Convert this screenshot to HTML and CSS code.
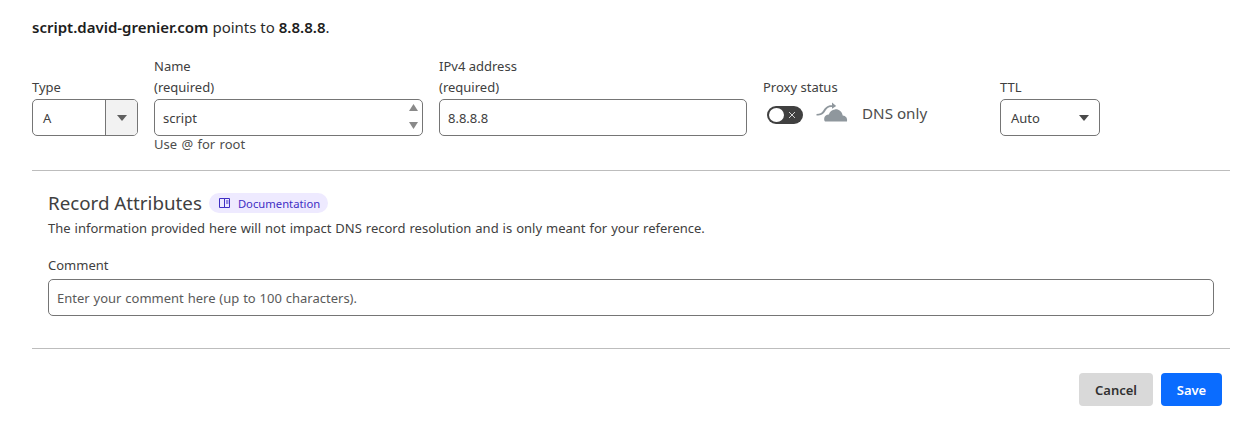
FILE: index.html
```html
<!DOCTYPE html>
<html lang="en">
<head>
<meta charset="utf-8">
<title>DNS record</title>
<link rel="stylesheet" href="styles.css">
</head>
<body>
<main class="form">
  <p class="summary"><strong>script.david-grenier.com</strong> points to <strong>8.8.8.8</strong>.</p>
  <div class="fields">
    <div class="field field-type">
      <label class="label">Type</label>
      <div class="box select-type">
        <span class="value">A</span>
        <span class="select-arrow"><svg width="10" height="6" viewBox="0 0 10 6"><path d="M0 0h10L5 6z" fill="#5f5f5f"/></svg></span>
      </div>
    </div>
    <div class="field field-name">
      <label class="label">Name<br>(required)</label>
      <div class="box input-name">
        <span class="value value-name">script</span>
        <span class="spinner">
          <svg width="9" height="7" viewBox="0 0 9 7"><path d="M4.500 0L9 7H0z" fill="#8a8a8a"/></svg>
          <svg width="9" height="7" viewBox="0 0 9 7"><path d="M0 0h9L4.500 7z" fill="#8a8a8a"/></svg>
        </span>
      </div>
      <div class="hint">Use @ for root</div>
    </div>
    <div class="field field-ip">
      <label class="label">IPv4 address<br>(required)</label>
      <div class="box input-ip"><span class="value value-name">8.8.8.8</span></div>
    </div>
    <div class="field field-proxy">
      <label class="label">Proxy status</label>
      <div class="proxy">
        <span class="toggle">
          <span class="knob"></span>
          <svg class="toggle-x" width="8" height="8" viewBox="0 0 8 8" fill="none" stroke="#e4e4e4" stroke-width=".900"><path d="M1 1l6 6M7 1L1 7"/></svg>
        </span>
        <svg class="cloud" width="32" height="21" viewBox="0 0 32 21">
          <path d="M9 20.500h22c.8-3.200-1.200-5.800-4.300-6C25.800 10.500 22.800 8 19 8.400c-3 .3-5.200 2.300-6.200 5-2.300.1-4 1.300-4.500 3.300-.3 1.600-.1 3 .7 3.800z" fill="#8f979d"/>
          <path d="M0.500 13c3.500 0 5-.9 6.800-3.500C9 6.800 11 4.200 15.500 4.200h.5V1.500l4.200 3.400L16 7.800V6h-.7c-3.200 0-4.800 2.100-6.300 4.500-1.800 2.700-3.600 4-8.500 4z" fill="#8f979d"/>
        </svg>
        <span class="proxy-text">DNS only</span>
      </div>
    </div>
    <div class="field field-ttl">
      <label class="label">TTL</label>
      <div class="box select-ttl">
        <span>Auto</span>
        <svg width="10" height="6" viewBox="0 0 10 6"><path d="M0 0h10L5 6z" fill="#4a4a4a"/></svg>
      </div>
    </div>
  </div>
  <hr class="rule rule-top">
  <section class="attributes">
    <div class="attr-head">
      <h2>Record Attributes</h2>
      <a class="doc-pill">
        <svg width="11" height="10" viewBox="0 0 11 10" fill="none" stroke="#3f2fc4" stroke-width="1"><path d="M.500.500h5v9h-5zM5.500.500h5v9h-5z"/><path d="M7 3h2.500M7 5h2.500"/></svg>
        <span>Documentation</span>
      </a>
    </div>
    <p class="attr-desc">The information provided here will not impact DNS record resolution and is only meant for your reference.</p>
    <label class="label comment-label">Comment</label>
    <div class="box input-comment">Enter your comment here (up to 100 characters).</div>
  </section>
  <hr class="rule rule-bottom">
  <div class="actions">
    <button class="btn btn-cancel">Cancel</button>
    <button class="btn btn-save">Save</button>
  </div>
</main>
</body>
</html>
```
FILE: styles.css
```css
* { box-sizing: border-box; }
html, body { margin: 0; padding: 0; background: #fff; }
body {
  font-family: "Noto Sans", "Open Sans", sans-serif;
  font-size: 13px;
  color: #404040;
  width: 1253px;
  height: 421px;
  overflow: hidden;
}
.form { padding: 17px 23px 0 32px; }
.summary { margin: 0; font-size: 15px; line-height: 20px; color: #2b2b2b; }
.summary strong { font-weight: 600; color: #1d1d1d; }
.fields { display: flex; margin-top: 19px; height: 98px; align-items: flex-start; }
.field { display: flex; flex-direction: column; }
.field-type { width: 106px; margin-right: 16px; padding-top: 21px; }
.field-name { width: 269px; margin-right: 16px; }
.field-ip { width: 308px; margin-right: 16px; }
.field-proxy { width: 237px; padding-top: 21px; }
.field-ttl { width: 100px; padding-top: 21px; }
.label { display: block; line-height: 21px; font-size: 13px; color: #404040; }
.box {
  border: 1px solid #757575;
  border-radius: 5px;
  background: #fff;
  height: 37px;
  display: flex;
  align-items: center;
  margin-top: 1px;
}
.select-type { overflow: hidden; }
.select-type .value { flex: 1; padding-left: 10px; }
.select-arrow {
  width: 32px;
  height: 100%;
  background: #f2f2f2;
  border-left: 1px solid #757575;
  display: flex;
  align-items: center;
  justify-content: center;
}
.value-name { flex: 1; padding-left: 8px; }
.spinner {
  display: flex;
  flex-direction: column;
  justify-content: space-between;
  height: 25px;
  margin: -3px 4px 0 0;
}
.hint { font-size: 13px; line-height: 17px; word-spacing: 1px; color: #4d4d4d; }
.proxy { display: flex; align-items: center; height: 32px; padding-left: 4px; }
.toggle {
  width: 36px;
  height: 18px;
  margin-top: 2px;
  border-radius: 9px;
  background: #404040;
  display: flex;
  align-items: center;
  padding: 0 2px;
}
.knob { width: 15px; height: 14px; border-radius: 50%; background: #fff; }
.toggle-x { margin-left: 4px; }
.cloud { margin-left: 13px; margin-top: -6px; }
.proxy-text { margin: -2px 0 0 14px; font-size: 15.200px; color: #4d4d4d; }
.select-ttl { justify-content: space-between; padding: 0 10px; }
.rule { border: 0; border-top: 1px solid #bdbdbd; margin: 0; }
.rule-top { margin-top: 16px; width: 1198px; }
.attributes { padding: 21px 16px 0; }
.attr-head { display: flex; align-items: center; height: 22px; }
.attr-head h2 { margin: 0; font-size: 18.750px; font-weight: 400; color: #404040; line-height: 22px; }
.doc-pill {
  display: flex;
  align-items: center;
  height: 20px;
  margin-left: 7px;
  padding: 0 8px 0 10px;
  background: #eeeaff;
  border-radius: 10px;
  color: #3f2fc4;
  font-size: 11.250px;
}
.doc-pill span { margin-left: 8px; }
.attr-desc { margin: 4px 0 0; line-height: 20px; font-size: 13px; word-spacing: .6px; }
.comment-label { margin-top: 17px; }
.input-comment { margin-top: 3px; padding-left: 8px; color: #5a5a5a; word-spacing: .5px; }
.rule-bottom { margin-top: 32px; width: 1198px; }
.actions { display: flex; justify-content: flex-end; gap: 8px; margin-top: 24px; padding-right: 8px; }
.btn {
  border: 0;
  border-radius: 4px;
  height: 33px;
  font-family: inherit;
  font-size: 13px;
  font-weight: 600;
}
.btn-cancel { width: 74px; background: #d9d9d9; color: #313131; }
.btn-save { width: 61px; background: #0a6cff; color: #fff; }
```
